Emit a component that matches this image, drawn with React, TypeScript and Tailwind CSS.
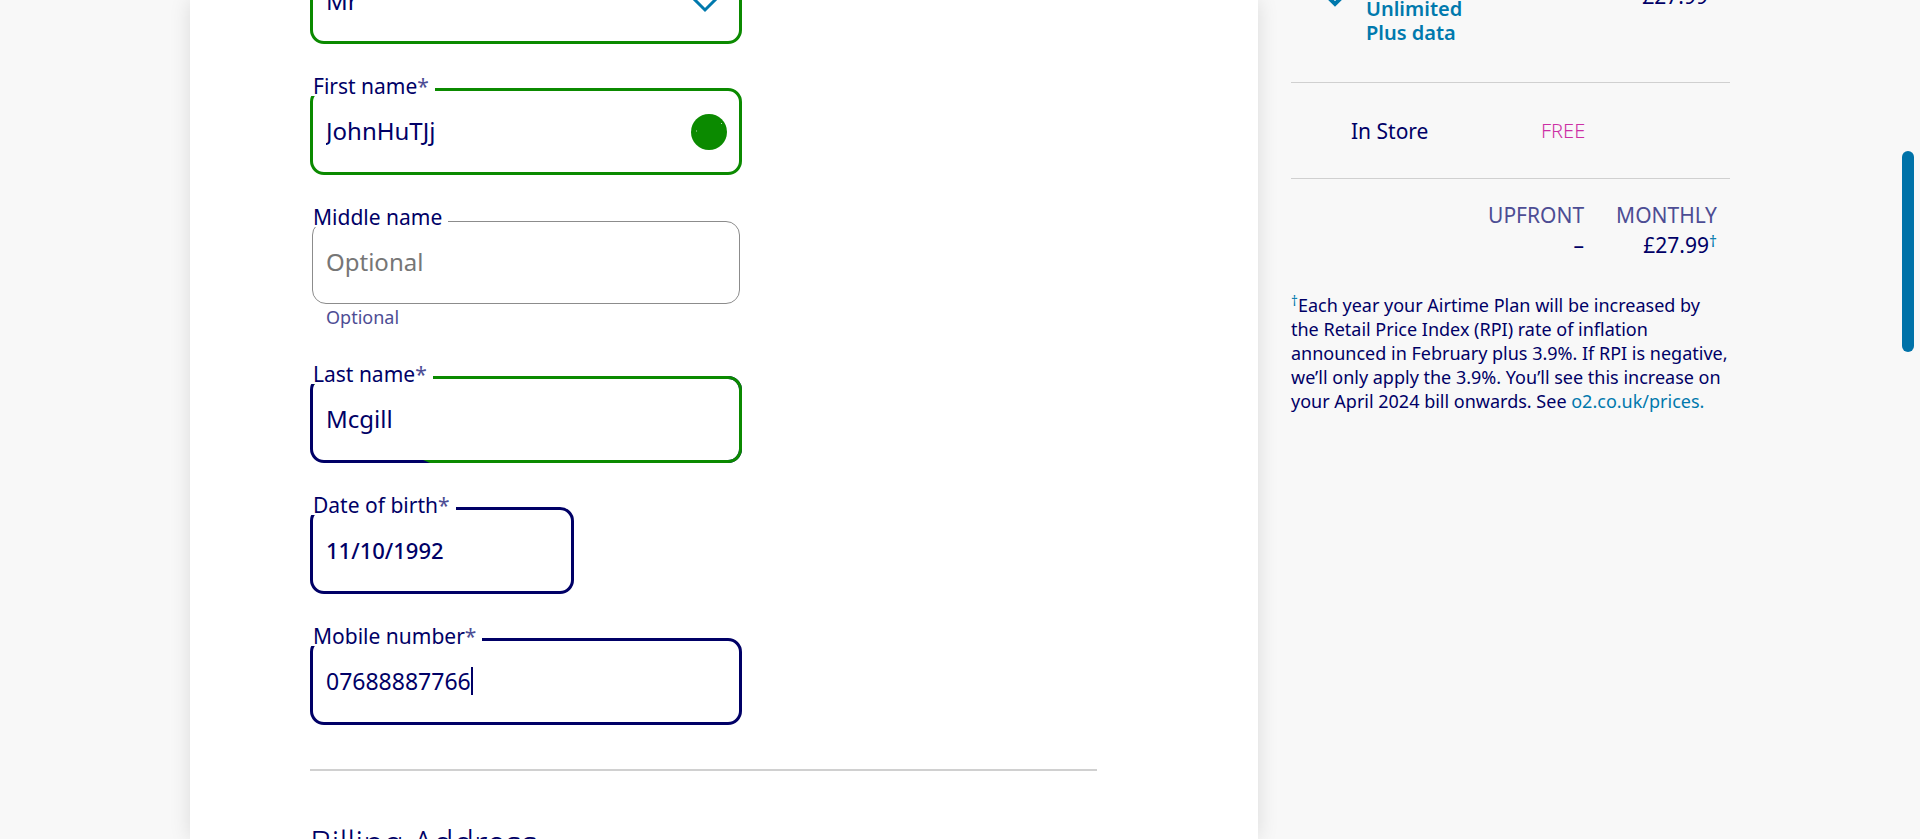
import { ReactNode } from "react";

type Tone = "valid" | "entered" | "idle" | "changing";

const toneClass: Record<Tone, string> = {
  valid: "border-[3px] border-[#0b8a00]",
  entered: "border-[3px] border-[#000066]",
  changing: "border-[3px] border-[#000066]",
  idle: "border border-[#8c8c8c]",
};

type FieldProps = {
  id: string;
  label: string;
  value?: string;
  placeholder?: string;
  required?: boolean;
  tone: Tone;
  textClass?: string;
  widthClass?: string;
  hint?: string;
  children?: ReactNode;
};

function Field({
  id,
  label,
  value,
  placeholder,
  required = false,
  tone,
  textClass = "text-[24px]",
  widthClass = "max-w-[432px]",
  hint,
  children,
}: FieldProps) {
  return (
    <div className={`w-full ${widthClass}`}>
      <div className={`relative h-[87px] ${tone === "idle" ? "p-0.5" : ""}`}>
        <input
          id={id}
          type="text"
          defaultValue={value}
          placeholder={placeholder}
          className={`h-full w-full rounded-[14px] bg-white px-[13px] pb-0.5 text-[#000066] outline-none placeholder:text-[#767676] ${toneClass[tone]} ${textClass}`}
        />
        {tone === "changing" && (
          <span className="pointer-events-none absolute inset-0 rounded-[14px] border-[3px] border-[#0b8a00] [clip-path:polygon(4px_0,100%_0,100%_100%,120px_100%,112px_96%,4px_50%)]" />
        )}
        <label
          htmlFor={id}
          className="absolute -top-4 left-0 bg-white pt-1 pr-1.5 pl-[3px] text-[21px] leading-5 text-[#000066]"
        >
          {label}
          {required && <span className="text-[#4d4d94]">*</span>}
        </label>
        {children}
      </div>
      {hint && <p className="h-[26px] px-4 text-[18px] leading-[22px] text-[#4d4d94]">{hint}</p>}
    </div>
  );
}

function CustomerForm() {
  return (
    <form className="-mt-[43px] flex flex-col gap-11 pr-[161px] pl-[120px]">
      <div className="relative h-[87px] w-full max-w-[432px]">
        <select
          aria-label="Title"
          defaultValue="Mr"
          className="h-full w-full appearance-none rounded-[14px] border-[3px] border-[#0b8a00] bg-white px-[13px] text-[24px] text-[#000066] outline-none"
        >
          <option>Mr</option>
          <option>Mrs</option>
          <option>Miss</option>
          <option>Ms</option>
        </select>
        <svg
          className="pointer-events-none absolute top-9 right-[22px] h-5 w-[30px]"
          viewBox="0 0 30 20"
          fill="none"
          stroke="#0079ad"
          strokeWidth="3"
          aria-hidden="true"
        >
          <path d="M2 4L15 17L28 4" />
        </svg>
      </div>

      <Field id="first-name" label="First name" value="JohnHuTJj" required tone="valid">
        <svg className="absolute top-[26px] right-[15px] size-9" viewBox="0 0 36 36" aria-hidden="true">
          <circle cx="18" cy="18" r="18" fill="#0b8a00" />
          <path d="M5 17h1M30 9.500h1" stroke="#ffffff" strokeWidth="1" opacity="0.7" />
        </svg>
      </Field>
      <Field id="middle-name" label="Middle name" placeholder="Optional" tone="idle" hint="Optional" />
      <Field id="last-name" label="Last name" value="Mcgill" required tone="changing" />
      <Field
        id="birth-date"
        label="Date of birth"
        value="11/10/1992"
        required
        tone="entered"
        textClass="text-[22px] font-medium"
        widthClass="max-w-[264px]"
      />
      <Field
        id="mobile"
        label="Mobile number"
        value="07688887766"
        required
        tone="entered"
        textClass="text-[23px]"
      >
        <span className="pointer-events-none absolute top-[29px] left-[161px] h-7 w-0.5 bg-[#000066]" />
      </Field>

      <hr className="border-t-2 border-[#d0d0d0]" />
      <h2 className="pt-2 text-[34px] leading-10 font-light text-[#000066]">Billing Address</h2>
    </form>
  );
}

function Dagger() {
  return <sup className="-top-1.5 text-[#0079ad]">†</sup>;
}

function OrderSummary() {
  return (
    <aside className="w-[472px] shrink-0 pl-[33px] text-[21px] leading-6 text-[#000066]">
      <div className="-mt-1 flex border-b border-[#d0d0d0] pr-[22px] pb-[37px] pl-[35px]">
        <svg
          className="-mt-[3px] h-4 w-5"
          viewBox="0 0 20 16"
          fill="none"
          stroke="#0079ad"
          strokeWidth="4"
          aria-hidden="true"
        >
          <path d="M1 3L9 11L17 3" />
        </svg>
        <a href="#plan" className="ml-5 w-28 pt-px text-[20px] font-semibold text-[#0079ad]">
          Unlimited Plus data
        </a>
        <span className="-mt-3 ml-auto">£27.99</span>
      </div>
      <div className="flex border-b border-[#d0d0d0] pt-9 pb-[35px] pl-[60px]">
        <span className="w-[190px]">In Store</span>
        <span className="text-[20px] font-light text-[#cc2fa5]">FREE</span>
      </div>
      <table className="mt-6 mr-[13px] ml-auto text-right">
        <thead>
          <tr className="text-[#4d4d94]">
            <th className="font-normal">UPFRONT</th>
            <th className="pl-8 font-normal">MONTHLY</th>
          </tr>
        </thead>
        <tbody>
          <tr>
            <td className="pt-1.5">–</td>
            <td className="pt-1.5">
              £27.99
              <Dagger />
            </td>
          </tr>
        </tbody>
      </table>
      <p className="mt-9 text-[18px]">
        <Dagger />
        Each year your Airtime Plan will be increased by the Retail Price Index (RPI) rate of inflation announced in
        February plus 3.9%. If RPI is negative, we’ll only apply the 3.9%. You’ll see this increase on your April 2024
        bill onwards. See{" "}
        <a href="#prices" className="text-[#0079ad]">
          o2.co.uk/prices.
        </a>
      </p>
    </aside>
  );
}

export default function App() {
  return (
    <div className="relative h-screen overflow-hidden bg-[#f8f8f8] font-['Noto_Sans','Open_Sans',sans-serif]">
      <div className="mx-auto flex h-full max-w-[1540px]">
        <main className="min-w-0 flex-1 bg-white shadow-[0_0_20px_rgba(0,0,0,0.12)]">
          <CustomerForm />
        </main>
        <OrderSummary />
      </div>
      <div className="absolute top-[151px] right-1.5 h-[201px] w-3 rounded-full bg-[#0072a8]" />
    </div>
  );
}
